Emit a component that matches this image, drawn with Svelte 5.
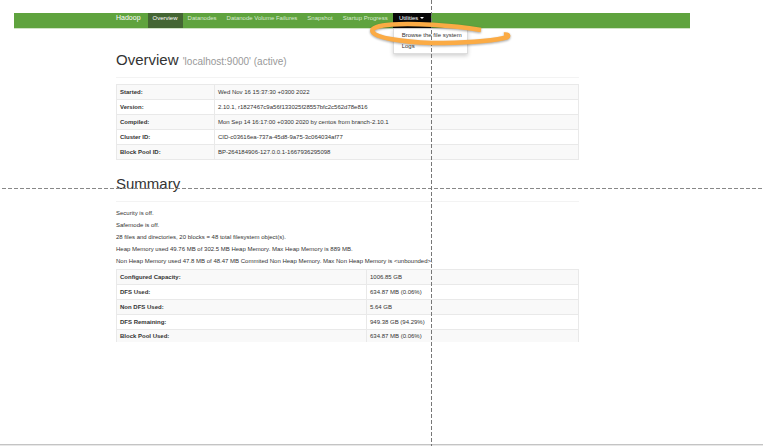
<script>
  const tabs = ['Overview', 'Datanodes', 'Datanode Volume Failures', 'Snapshot', 'Startup Progress'];
  const tools = ['Browse the file system', 'Logs'];
  const info = [
    ['Started:', 'Wed Nov 16 15:37:30 +0300 2022'],
    ['Version:', '2.10.1, r1827467c9a56f133025f28557bfc2c562d78e816'],
    ['Compiled:', 'Mon Sep 14 16:17:00 +0300 2020 by centos from branch-2.10.1'],
    ['Cluster ID:', 'CID-c03616ea-737a-45d8-9a75-3c064034af77'],
    ['Block Pool ID:', 'BP-264184906-127.0.0.1-1667936295098']
  ];
  const notes = [
    'Security is off.',
    'Safemode is off.',
    '28 files and directories, 20 blocks = 48 total filesystem object(s).',
    'Heap Memory used 49.76 MB of 302.5 MB Heap Memory. Max Heap Memory is 889 MB.',
    'Non Heap Memory used 47.8 MB of 48.47 MB Commited Non Heap Memory. Max Non Heap Memory is <unbounded>.'
  ];
  const capacity = [
    ['Configured Capacity:', '1006.85 GB'],
    ['DFS Used:', '634.87 MB (0.06%)'],
    ['Non DFS Used:', '5.64 GB'],
    ['DFS Remaining:', '949.38 GB (94.29%)'],
    ['Block Pool Used:', '634.87 MB (0.06%)']
  ];
</script>

<div class="page">
  <nav>
    <a class="brand" href="#top">Hadoop</a>
    {#each tabs as tab, i}
      <a class="tab" class:active={i === 0} href="#{tab}">{tab}</a>
    {/each}
    <div class="dropdown">
      <button type="button" aria-expanded="true">Utilities<span class="caret"></span></button>
      <div class="menu">
        {#each tools as tool}
          <a href="#{tool}">{tool}</a>
        {/each}
      </div>
    </div>
  </nav>

  <main>
    <h1>Overview <small>'localhost:9000' (active)</small></h1>
    <table class="info">
      <tbody>
        {#each info as [name, value]}
          <tr><th scope="row">{name}</th><td>{value}</td></tr>
        {/each}
      </tbody>
    </table>

    <h1 class="second">Summary</h1>
    {#each notes as note}
      <p>{note}</p>
    {/each}
    <table class="capacity">
      <tbody>
        {#each capacity as [name, value]}
          <tr><th scope="row">{name}</th><td>{value}</td></tr>
        {/each}
      </tbody>
    </table>
  </main>

  <div class="bottom"></div>

  <div class="guide-x"></div>
  <div class="guide-y"></div>
  <svg class="mark" width="150" height="34" viewBox="366 16 150 34" aria-hidden="true">
    <path d="M481 30C450 25 412 23 392 24.500C378 25.500 371 28 372.500 31.500C375 38 402 42 432 43C462 43 490 41 504 38C510 37 509 34 504 34.500" />
  </svg>
</div>

<style>
  :global(body) { margin: 0; background: #fff; }
  .page {
    position: relative;
    display: flex;
    flex-direction: column;
    box-sizing: border-box;
    min-height: 100vh;
    padding-top: 13px;
    overflow: hidden;
    font: 6px/8px "Liberation Sans", Arial, sans-serif;
    color: #333;
  }
  a { color: inherit; text-decoration: none; }
  nav {
    display: flex;
    box-sizing: border-box;
    height: 16px;
    margin: 0 73px 0 14px;
    padding-left: 102px;
    background: #5fa33e;
    border-bottom: 1px solid #cfe3c5;
    color: #d9ead0;
    white-space: nowrap;
  }
  .brand { padding-right: 7px; font-size: 7px; line-height: 9px; color: #fff; }
  .tab { padding: 1px 5px 0; }
  .active { background: #446633; color: #fff; }
  .dropdown { position: relative; display: flex; }
  button {
    display: flex;
    justify-content: center;
    align-items: flex-start;
    gap: 2px;
    width: 38px;
    padding: 1px 0 0;
    border: 0;
    background: #080808;
    color: #fff;
    font: inherit;
  }
  .caret {
    margin-top: 3px;
    border: 2px solid transparent;
    border-top-color: #fff;
    border-bottom: 0;
  }
  .menu {
    position: absolute;
    top: 15px;
    left: 0;
    box-sizing: border-box;
    width: 75px;
    padding: 1px 8px;
    display: flex;
    flex-direction: column;
    background: #fff;
    border: 1px solid #ddd;
    box-shadow: 0 2px 4px rgba(0, 0, 0, 0.18);
    color: #333;
  }
  .menu a { line-height: 11px; }
  main { margin: 22px 184px 0 116px; }
  h1 {
    margin: 0 0 6px;
    padding-bottom: 7px;
    border-bottom: 1px solid #f3f3f3;
    font-size: 15px;
    line-height: 17px;
    font-weight: 400;
  }
  .second { margin: 15px 0 7px; padding-bottom: 9px; }
  small { font-size: 10px; color: #999; }
  p { margin: 0 0 4px; white-space: nowrap; }
  table {
    width: 100%;
    table-layout: fixed;
    border-collapse: collapse;
    border: 1px solid #e9e9e9;
  }
  th, td {
    height: 14px;
    padding: 0 3px;
    border: 1px solid #e9e9e9;
    text-align: left;
    white-space: nowrap;
  }
  tr:nth-child(odd) { background: #f9f9f9; }
  .info th { width: 91px; }
  .capacity th { width: 243px; }
  .capacity { border-bottom: 0; }
  .capacity tr:last-child > * { border-bottom: 0; height: 12px; }
  .bottom { margin-top: auto; height: 1px; border-top: 1px solid #c4c4c4; background: #e8e8e8; }
  .mark {
    position: absolute;
    left: 366px;
    top: 16px;
    filter: drop-shadow(0 1px 1px rgba(0, 0, 0, 0.35));
  }
  .mark path {
    fill: none;
    stroke: #fbab45;
    stroke-width: 4.5;
    stroke-linejoin: round;
  }
  .guide-x {
    position: absolute;
    left: 0;
    right: 0;
    top: 188px;
    height: 1px;
    background: repeating-linear-gradient(90deg, #fff0 0 2px, #888 2px 6px);
  }
  .guide-y {
    position: absolute;
    top: 0;
    bottom: 0;
    left: 431px;
    width: 1px;
    background: repeating-linear-gradient(#777 0 4px, #fff0 4px 6px);
  }
</style>
